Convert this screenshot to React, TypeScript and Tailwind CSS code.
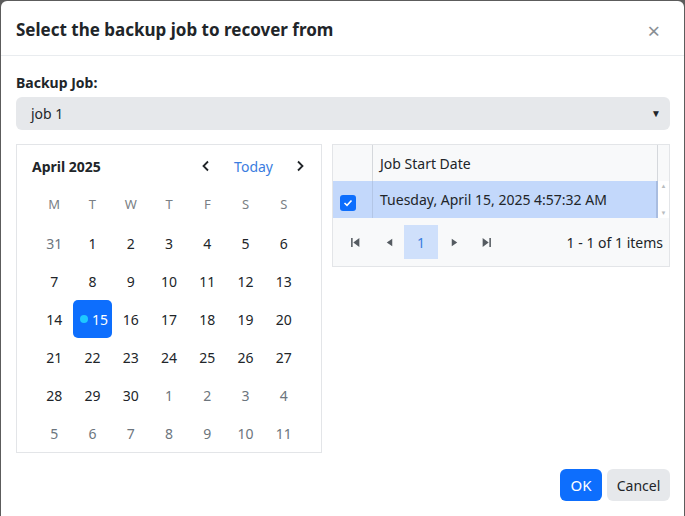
const weeks = [
  [31, 1, 2, 3, 4, 5, 6],
  [7, 8, 9, 10, 11, 12, 13],
  [14, 15, 16, 17, 18, 19, 20],
  [21, 22, 23, 24, 25, 26, 27],
  [28, 29, 30, 1, 2, 3, 4],
  [5, 6, 7, 8, 9, 10, 11],
];

function isOtherMonth(row: number, day: number) {
  return (row === 0 && day > 20) || (row >= 4 && day < 20);
}

function Calendar() {
  return (
    <div className="w-[306px] shrink-0 border border-[#e3e5e8] pt-[9px]">
      <div className="flex h-6 items-center justify-between pl-[15px] pr-[16px]">
        <span className="text-[14px] font-bold text-[#212529]">April 2025</span>
        <div className="flex items-center">
          <svg width="10" height="12" viewBox="0 0 10 12" className="mr-[23px]">
            <path d="M7 1.5 2.5 6 7 10.5" fill="none" stroke="#212529" strokeWidth="1.8" />
          </svg>
          <span className="text-[14px] text-[#3b7de0]">Today</span>
          <svg width="10" height="12" viewBox="0 0 10 12" className="ml-[22px]">
            <path d="M3 1.5 7.5 6 3 10.5" fill="none" stroke="#212529" strokeWidth="1.8" />
          </svg>
        </div>
      </div>
      <div className="mt-2 grid grid-cols-7 px-[18px]">
        {["M", "T", "W", "T", "F", "S", "S"].map((d, i) => (
          <div key={i} className="flex h-[38px] items-center justify-center text-[13px] text-[#7a7f85]">
            {d}
          </div>
        ))}
        {weeks.map((week, r) =>
          week.map((day, c) => {
            const selected = r === 2 && day === 15;
            if (selected) {
              return (
                <div key={`${r}-${c}`} className="flex h-[38px] items-center justify-center gap-[4px] rounded-[5px] bg-[#0d6efd] pl-[3px] text-[14px] text-white">
                  <span className="h-[8px] w-[8px] rounded-full bg-[#1ec8ff]" />
                  {day}
                </div>
              );
            }
            return (
              <div
                key={`${r}-${c}`}
                className={`flex h-[38px] items-center justify-center text-[14px] ${
                  isOtherMonth(r, day) ? "text-[#6c757d]" : "text-[#212529]"
                }`}
              >
                {day}
              </div>
            );
          })
        )}
      </div>
    </div>
  );
}

function PagerIcon({ d }: { d: string }) {
  return (
    <svg width="11" height="11" viewBox="0 0 10 10">
      <path d={d} fill="#555b61" />
    </svg>
  );
}

function JobGrid() {
  return (
    <div className="flex-1 self-start border border-[#e3e5e8] text-[14px] text-[#212529]">
      <div className="flex h-9 bg-[#f8f9fa]">
        <div className="w-10 border-r border-[#d5d8dc]" />
        <div className="flex flex-1 items-center border-r border-[#d5d8dc] pl-[7px]">Job Start Date</div>
        <div className="w-[11px]" />
      </div>
      <div className="flex h-[37px] bg-[#c3d8fb]">
        <div className="flex w-10 items-center border-r border-[#b3c6e6] pl-[7px] pt-[6px]">
          <span className="flex h-4 w-4 items-center justify-center rounded-[3px] bg-[#0d6efd]">
            <svg width="10" height="8" viewBox="0 0 10 8">
              <path d="M1.5 4 4 6.3 8.5 1.5" fill="none" stroke="white" strokeWidth="1.6" />
            </svg>
          </span>
        </div>
        <div className="flex flex-1 items-center border-r-2 border-[#a9bde0] pl-[7px]">
          Tuesday, April 15, 2025 4:57:32 AM
        </div>
        <div className="flex w-[11px] flex-col items-center justify-between bg-white py-[2px] text-[6px] leading-none text-[#b8bcc0]">
          <span>▲</span>
          <span>▼</span>
        </div>
      </div>
      <div className="flex h-[48px] items-center bg-[#f8f9fa] pl-[17px] pr-[6px]">
        <PagerIcon d="M1 1h1.4v8H1zM8.5 1v8L3 5z" />
        <span className="ml-[23px]">
          <PagerIcon d="M7.5 1.5v7L2.5 5z" />
        </span>
        <span className="ml-[9px] flex h-[34px] w-[34px] items-center justify-center bg-[#cfe0fb] text-[#3b7de0]">1</span>
        <span className="ml-[11px]">
          <PagerIcon d="M2.5 1.5v7L7.5 5z" />
        </span>
        <span className="ml-[21px]">
          <PagerIcon d="M1.5 1v8L7 5zM7.6 1H9v8H7.6z" />
        </span>
        <span className="ml-auto">1 - 1 of 1 items</span>
      </div>
    </div>
  );
}

export default function App() {
  return (
    <div className="h-[516px] w-[685px] overflow-hidden bg-[#5c5c5c] px-px pt-px" style={{ fontFamily: '"Noto Sans", "Open Sans", sans-serif' }}>
      <div className="flex h-[530px] flex-col rounded-[6px] bg-white">
        <div className="flex h-[55px] items-center justify-between border-b border-[#e9ecef] pl-[15px] pr-[24px] pt-[3px]">
          <h1 className="text-[17px] font-bold text-[#212529]">Select the backup job to recover from</h1>
          <span className="text-[22px] leading-none text-[#8a8f94]">×</span>
        </div>
        <div className="pl-[15px] pr-[14px] pt-[16px]">
          <div className="text-[14px] font-bold text-[#212529]">Backup Job:</div>
          <div className="mt-[4px] flex h-[33px] items-center justify-between rounded-[6px] bg-[#e6e8eb] pl-[15px] pr-[9px] text-[14px] text-[#212529]">
            <span>job 1</span>
            <span className="text-[10px]">▼</span>
          </div>
          <div className="mt-[14px] flex gap-[10px]">
            <Calendar />
            <JobGrid />
          </div>
          <div className="mt-[16px] flex justify-end gap-[5px]">
            <button className="h-8 w-[42px] rounded-[6px] bg-[#0d6efd] text-[15px] text-white">OK</button>
            <button className="h-8 w-[63px] rounded-[6px] bg-[#e6e8eb] text-[14px] text-[#212529]">Cancel</button>
          </div>
        </div>
      </div>
    </div>
  );
}
